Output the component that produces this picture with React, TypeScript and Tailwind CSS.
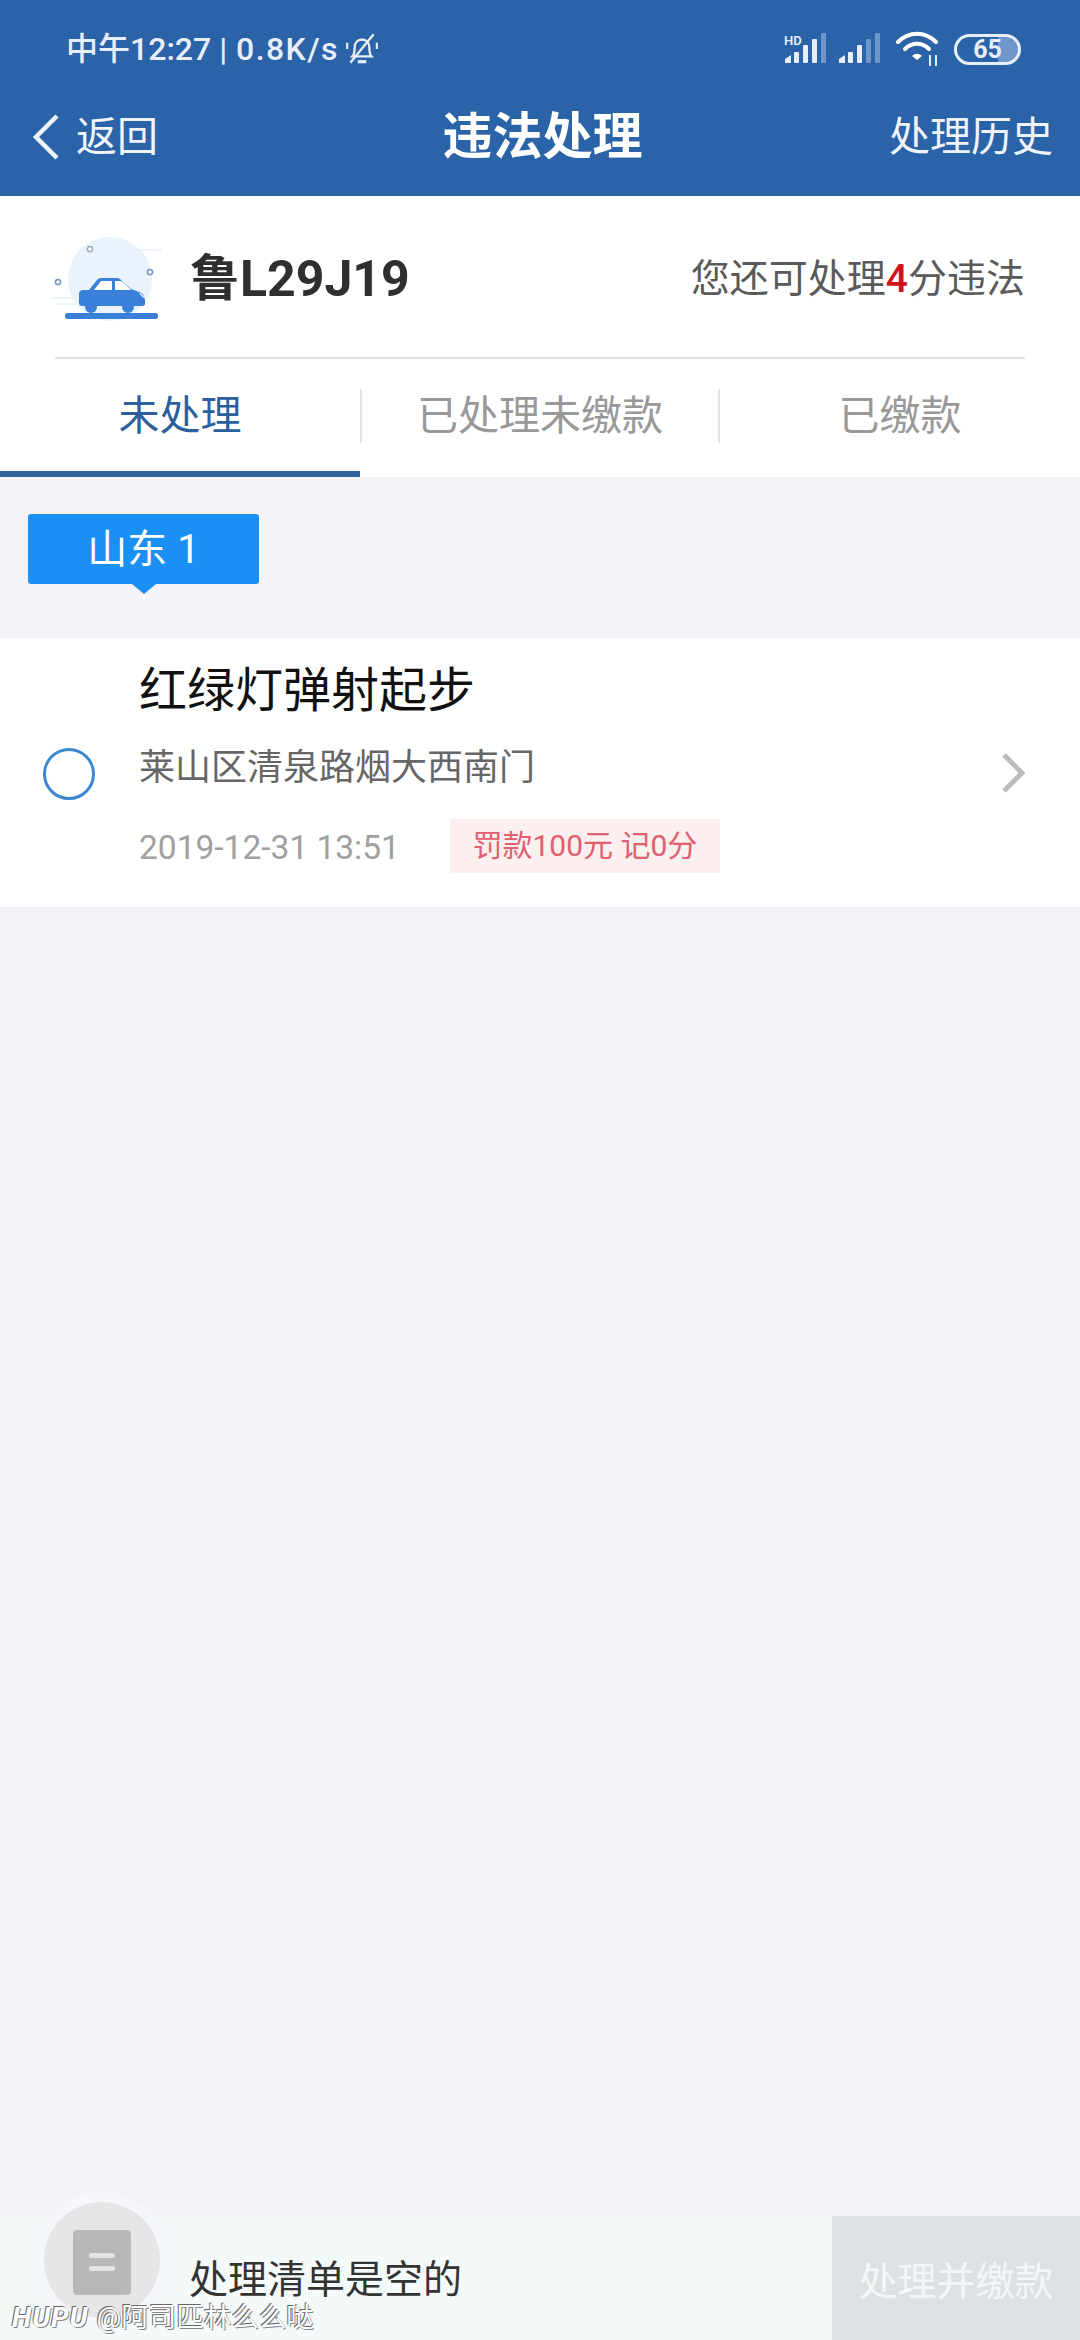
const F = '"Roboto","Noto Sans CJK SC",sans-serif';

function CarIcon() {
  return (
    <svg width="112" height="84" viewBox="0 0 112 84" className="block overflow-visible">
      <circle cx="60" cy="42" r="42" fill="#eaf2fb" />
      <rect x="88" y="12" width="24" height="2" fill="#eef4fb" />
      <rect x="0" y="60" width="28" height="2" fill="#eef4fb" />
      <rect x="6" y="66" width="22" height="2" fill="#eef4fb" />
      <circle cx="40" cy="12" r="2.6" fill="#fff" stroke="#9aa9c0" strokeWidth="1.5" />
      <circle cx="100" cy="35" r="2.6" fill="#fff" stroke="#6f94c4" strokeWidth="1.5" />
      <circle cx="8" cy="45" r="2.6" fill="#fff" stroke="#6f94c4" strokeWidth="1.5" />
      <circle cx="41" cy="70" r="6" fill="#3a80d8" />
      <circle cx="78" cy="70" r="6" fill="#3a80d8" />
      <path d="M29 57c0-3 2-4 4-4h6l8-10c1-1 2-2 4-2h16c2 0 3 1 4 2l10 9 8 3c4 1 6 5 6 9v3c0 1-1 2-2 2H32c-2 0-3-1-3-3z" fill="#3a80d8" />
      <path d="M44 53l7-9h11v9zM65 44h5c1 0 2 0 3 1l8 8H65z" fill="#fff" />
      <path d="M90 56c1 2 3 4 5 5" fill="none" stroke="#dbe8f8" strokeWidth="1.5" />
      <rect x="15" y="76" width="93" height="6" rx="2.5" fill="#3a80d8" />
    </svg>
  );
}

function Bars({ hd }: { hd?: boolean }) {
  const third = hd ? "#e8eef7" : "#6f96cb";
  return (
    <svg width="42" height="32" viewBox="0 0 42 32" className="block">
      {hd && <text x="0" y="12" fontSize="13" fontWeight="600" fill="#e8eef7" fontFamily="Roboto,sans-serif">HD</text>}
      <path d="M1 30v-4l6-4v8z" fill="#e8eef7" />
      <rect x="10" y="19" width="5" height="11" rx="1" fill="#e8eef7" />
      <rect x="19" y="12" width="5" height="18" rx="1" fill="#e8eef7" />
      <rect x="28" y="6" width="5" height="24" rx="1" fill={third} />
      <rect x="37" y="0" width="5" height="30" rx="1" fill="#6f96cb" />
    </svg>
  );
}

function Wifi() {
  return (
    <svg width="44" height="36" viewBox="0 0 44 36" fill="none" className="block">
      <path d="M2 11C13 0 29 0 40 11" stroke="#fff" strokeWidth="4" strokeLinecap="round" />
      <path d="M9 18c7-7 17-7 24 0" stroke="#fff" strokeWidth="4" strokeLinecap="round" />
      <path d="M16 25c3-3 7-3 10 0l-5 4z" fill="#fff" />
      <path d="M34 24v11M40 24v11" stroke="#e8eef7" strokeWidth="2" />
    </svg>
  );
}

function BellOff() {
  return (
    <svg width="36" height="36" viewBox="0 0 34 34" fill="none" stroke="#e8eef7" strokeWidth="2.2" className="block">
      <path d="M8 24c2-2 2-4 2-8 0-5 3-8 7-8s7 3 7 8c0 4 0 6 2 8z" />
      <path d="M13 29h8" strokeWidth="3" />
      <path d="M6 30L28 3" />
      <path d="M3 11v6M31 11v6" strokeWidth="2" />
    </svg>
  );
}

export default function App() {
  return (
    <div className="w-[1080px] h-[2340px] bg-[#f3f3f8] flex flex-col relative overflow-hidden" style={{ fontFamily: F }}>
      <header className="h-[196px] bg-[#2b63a8] text-white shrink-0 flex flex-col">
        <div className="h-[96px] flex items-center justify-between pl-[66px] pr-[59px] pt-[2px]">
          <div className="flex items-center text-[#e8eef7] text-[32px] font-medium leading-none">
            <span>中午12:27 | </span>
            <span className="ml-[9px] tracking-[1.4px]">0.8K/s</span>
            <span className="ml-[5px]"><BellOff /></span>
          </div>
          <div className="flex items-center">
            <Bars hd />
            <span className="ml-[12px]"><Bars /></span>
            <span className="ml-[16px]"><Wifi /></span>
            <div className="ml-[14px] w-[67px] h-[31px] rounded-full border-[3px] border-[#e8eef7] flex items-center justify-center text-[#e8eef7] text-[25px] font-bold leading-none bg-[linear-gradient(90deg,transparent_68%,#6f96cb_68%)]">65</div>
          </div>
        </div>
        <div className="flex-1 flex items-center justify-between pl-[32px] pr-[27px] pb-[18px]">
          <div className="flex items-center w-[300px]">
            <svg width="28" height="48" viewBox="0 0 28 48" fill="none" stroke="#f0f4fa" strokeWidth="4.5" className="block">
              <path d="M25 3L4 24l21 21" />
            </svg>
            <span className="ml-[16px] text-[41px] leading-none text-[#f0f4fa]">返回</span>
          </div>
          <div className="text-[50px] font-bold leading-none">违法处理</div>
          <div className="w-[300px] text-right text-[41px] leading-none text-[#f0f4fa]">处理历史</div>
        </div>
      </header>

      <section className="bg-white shrink-0">
        <div className="mx-[55px] h-[163px] border-b-2 border-[#e3e3e3] flex items-center justify-between">
          <div className="flex items-center -ml-[5px] pt-[4px]">
            <CarIcon />
            <span className="ml-[28px] text-[50px] font-bold leading-none text-[#2f2f2f]">鲁L29J19</span>
          </div>
          <div className="text-[39px] leading-none text-[#5a5a5a] pt-[6px]">
            您还可处理<span className="text-[#d0121b] font-medium">4</span>分违法
          </div>
        </div>
        <div className="h-[118px] flex">
          <div className="w-[360px] h-full border-b-[6px] border-[#2f659f] flex items-center justify-center text-[41px] text-[#2b5f9e] pt-[3px]">未处理</div>
          <div className="w-[360px] flex items-center justify-center text-[41px] text-[#999] pb-[3px] relative">
            已处理未缴款
            <i className="absolute left-0 top-[30px] h-[54px] w-[2px] bg-[#e3e3e3]" />
            <i className="absolute right-0 top-[30px] h-[54px] w-[2px] bg-[#e3e3e3]" />
          </div>
          <div className="w-[360px] flex items-center justify-center text-[41px] text-[#999] pb-[3px]">已缴款</div>
        </div>
      </section>

      <div className="h-[161px] shrink-0 pl-[28px] pt-[37px]">
        <div className="relative w-[231px] h-[70px] rounded-[3px] bg-[#1a90f5] text-white text-[40px] leading-none flex items-center justify-center pt-[2px]">
          山东 1
          <i className="absolute left-[104px] bottom-[-10px] w-0 h-0 border-x-[12px] border-x-transparent border-t-[10px] border-t-[#1a90f5]" />
        </div>
      </div>

      <section className="h-[269px] shrink-0 bg-white flex items-center pl-[43px] pr-[55px]">
        <div className="w-[52px] h-[52px] rounded-full border-[3px] border-[#3a88d0] shrink-0 mt-[2px]" />
        <div className="ml-[44px] flex-1 self-start pt-[29px]">
          <div className="text-[48px] leading-none text-[#111]">红绿灯弹射起步</div>
          <div className="mt-[35px] text-[36px] leading-none text-[#666]">莱山区清泉路烟大西南门</div>
          <div className="mt-[33px] flex items-center">
            <span className="text-[33.5px] leading-none text-[#a0a0a0] pt-[3px]">2019-12-31 13:51</span>
            <span className="ml-[50px] w-[270px] h-[54px] bg-[#fbeff0] flex items-center justify-center text-[30px] leading-none text-[#e0606e]">罚款100元 记0分</span>
          </div>
        </div>
        <svg width="24" height="42" viewBox="0 0 24 42" fill="none" stroke="#bcbcbc" strokeWidth="5" className="block shrink-0">
          <path d="M3 3l18 18L3 39" />
        </svg>
      </section>

      <div className="flex-1" />

      <footer className="h-[124px] shrink-0 flex bg-[#f4f9fa] relative">
        <div className="absolute left-[44px] top-[-14px] w-[116px] h-[116px] rounded-full bg-[#e6e6e6] flex items-center justify-center shadow-[0_0_0_10px_#f6f7fa]">
          <div className="w-[58px] h-[65px] mt-[4px] rounded-[4px] bg-[#b8b8b8] flex flex-col items-center justify-center gap-[8px]">
            <i className="w-[26px] h-[5px] rounded-full bg-[#e4e4e4]" />
            <i className="w-[26px] h-[5px] rounded-full bg-[#e4e4e4]" />
          </div>
        </div>
        <div className="flex-1 pl-[189px] pt-[45px] text-[39px] leading-none text-[#333]">处理清单是空的</div>
        <div className="w-[248px] bg-[#dee1e3] flex items-center justify-center text-[39px] text-[#f4f6f7] pt-[8px]">处理并缴款</div>
        <div className="absolute left-[12px] top-[88px] flex items-center text-[28px] leading-none text-white [text-shadow:-1px_-1px_0_#666,1px_1px_0_#888]">
          <span className="italic font-bold tracking-[1px]">HUPU</span>
          <span className="ml-[8px] text-[27.5px]">@阿司匹林么么哒</span>
        </div>
      </footer>
    </div>
  );
}
